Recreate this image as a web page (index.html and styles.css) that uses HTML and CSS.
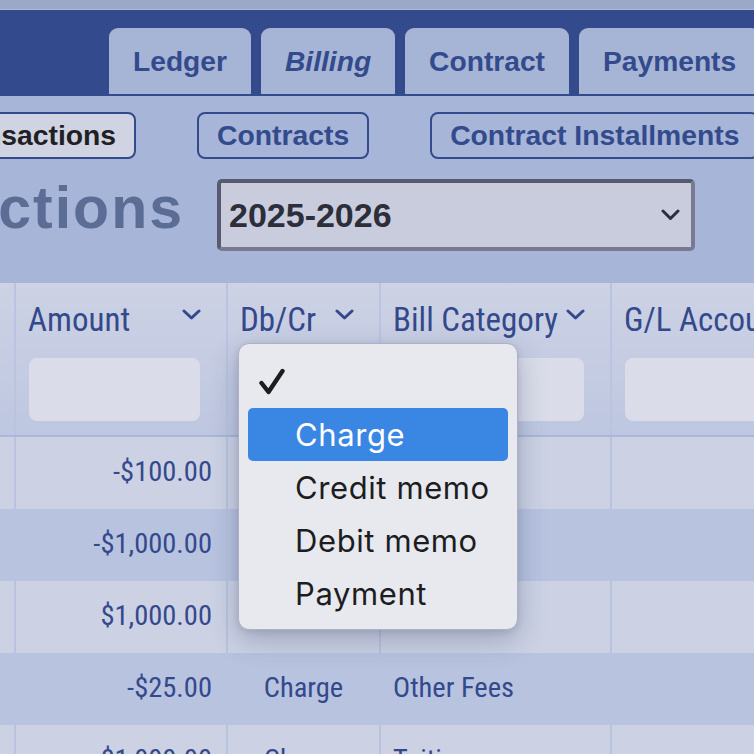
FILE: index.html
```html
<!DOCTYPE html>
<html lang="en">
<head>
<meta charset="utf-8">
<title>Billing Transactions</title>
<link rel="stylesheet" href="styles.css">
</head>
<body>
<div class="topbar"></div>
<header class="masthead">
  <nav class="tabs">
    <a class="tab">Ledger</a>
    <a class="tab tab-current">Billing</a>
    <a class="tab">Contract</a>
    <a class="tab">Payments</a>
  </nav>
</header>
<main class="content">
  <div class="subnav">
    <button class="subnav-btn is-active">Transactions</button>
    <button class="subnav-btn">Contracts</button>
    <button class="subnav-btn">Contract Installments</button>
  </div>
  <div class="title-row">
    <div class="title-box"><h1 class="page-title">Transactions</h1></div>
    <div class="year-select">
      <span class="year-value">2025-2026</span>
      <svg class="year-chevron" width="19" height="12" viewBox="0 0 19 12"><path d="M2 2 L9.5 9.5 L17 2" fill="none" stroke="#2c2e3a" stroke-width="3" stroke-linecap="round" stroke-linejoin="round"/></svg>
    </div>
  </div>

  <div class="grid-wrap">
    <div class="tr thead">
      <div class="th th-first"></div>
      <div class="th">
        <div class="th-label"><span>Amount</span><svg class="th-chev" width="19" height="11" viewBox="0 0 19 11"><path d="M2 2 L9.5 9 L17 2" fill="none" stroke="#34498c" stroke-width="3" stroke-linecap="round" stroke-linejoin="round"/></svg></div>
        <div class="filter"></div>
      </div>
      <div class="th">
        <div class="th-label"><span>Db/Cr</span><svg class="th-chev" width="19" height="11" viewBox="0 0 19 11"><path d="M2 2 L9.5 9 L17 2" fill="none" stroke="#34498c" stroke-width="3" stroke-linecap="round" stroke-linejoin="round"/></svg></div>
        <div class="filter"></div>
      </div>
      <div class="th">
        <div class="th-label"><span>Bill Category</span><svg class="th-chev" width="19" height="11" viewBox="0 0 19 11"><path d="M2 2 L9.5 9 L17 2" fill="none" stroke="#34498c" stroke-width="3" stroke-linecap="round" stroke-linejoin="round"/></svg></div>
        <div class="filter"></div>
      </div>
      <div class="th th-last">
        <div class="th-label"><span>G/L Account</span></div>
        <div class="filter"></div>
      </div>
    </div>

    <div class="tr row-light">
      <div class="td"></div>
      <div class="td num">-$100.00</div>
      <div class="td center"></div>
      <div class="td"></div>
      <div class="td"></div>
    </div>
    <div class="tr row-dark">
      <div class="td"></div>
      <div class="td num">-$1,000.00</div>
      <div class="td center"></div>
      <div class="td"></div>
      <div class="td"></div>
    </div>
    <div class="tr row-light">
      <div class="td"></div>
      <div class="td num">$1,000.00</div>
      <div class="td center"></div>
      <div class="td"></div>
      <div class="td"></div>
    </div>
    <div class="tr row-dark">
      <div class="td"></div>
      <div class="td num">-$25.00</div>
      <div class="td center">Charge</div>
      <div class="td">Other Fees</div>
      <div class="td"></div>
    </div>
    <div class="tr row-light">
      <div class="td"></div>
      <div class="td num">$1,000.00</div>
      <div class="td center">Charge</div>
      <div class="td">Tuition</div>
      <div class="td"></div>
    </div>

    <ul class="popup-menu">
      <li class="menu-item">
        <svg class="menu-check" width="28" height="28" viewBox="0 0 28 28"><path d="M3.5 15 L10.5 24 L24.5 3" fill="none" stroke="#1d1d1f" stroke-width="4.4" stroke-linecap="round" stroke-linejoin="round"/></svg>
      </li>
      <li class="menu-item is-hover">Charge</li>
      <li class="menu-item">Credit memo</li>
      <li class="menu-item">Debit memo</li>
      <li class="menu-item">Payment</li>
    </ul>
  </div>
</main>
</body>
</html>
```

FILE: styles.css
```css
* { box-sizing: border-box; }

html, body {
  margin: 0;
  padding: 0;
  overflow: hidden;
}

body {
  width: 754px;
  height: 754px;
  background: #a6b5d8;
  font-family: "Liberation Sans", Arial, sans-serif;
}

.topbar {
  height: 10px;
  background: #9ba8c8;
  border-bottom: 1px solid #aab7d8;
}

.masthead {
  background: #334a8c;
  padding: 18px 0 2px 109px;
  overflow: hidden;
}

.tabs {
  display: flex;
  gap: 10px;
  height: 66px;
}

.tab {
  flex: none;
  display: flex;
  align-items: center;
  padding: 0 24px;
  background: #a6b4d6;
  border-radius: 9px 9px 0 0;
  color: #334a8c;
  font-weight: bold;
  font-size: 28.2px;
  white-space: nowrap;
}

.tab-current { font-style: italic; }

.content {
  overflow: hidden;
}

.subnav {
  display: flex;
  gap: 61px;
  margin: 16px 0 0 -78.5px;
  width: 900px;
}

.subnav-btn {
  flex: none;
  height: 47px;
  padding: 0 18px;
  border: 2px solid #334a8c;
  border-radius: 8px;
  background: transparent;
  color: #334a8c;
  font-family: "Liberation Sans", Arial, sans-serif;
  font-weight: bold;
  font-size: 28.3px;
  white-space: nowrap;
}

.subnav-btn.is-active {
  background: #d0d3e1;
  color: #1f1f24;
}

.title-row {
  display: flex;
  align-items: center;
  margin-top: 20px;
  gap: 33px;
}

.title-box {
  flex: none;
  align-self: flex-start;
  width: 184px;
  display: flex;
  justify-content: flex-end;
  overflow: hidden;
}

.page-title {
  flex: none;
  margin: 0;
  font-size: 59px;
  line-height: 58px;
  font-weight: bold;
  letter-spacing: 2px;
  color: #5b6d94;
  white-space: nowrap;
}

.year-select {
  flex: none;
  width: 478px;
  height: 72px;
  display: flex;
  align-items: center;
  justify-content: space-between;
  padding: 0 11px 0 8px;
  background: #c9ccdc;
  border: 4px solid;
  border-color: #585b6e #777a90 #777a90 #585b6e;
  border-radius: 5px;
}

.year-value {
  font-size: 34px;
  font-weight: bold;
  color: #2c2e3a;
}

.grid-wrap {
  position: relative;
  margin-top: 32px;
  font-family: "Roboto Condensed", "Roboto", "Liberation Sans Narrow", sans-serif;
  font-stretch: condensed;
  color: #34498c;
}

.tr {
  display: grid;
  grid-template-columns: 14px 212px 153px 231px 144px;
}

.thead {
  height: 154px;
  background: linear-gradient(#cdd2e4, #bec7e1);
  border-bottom: 2px solid #aab7d8;
}

.th {
  display: flex;
  flex-direction: column;
  padding: 18px 25px 14px 12px;
  border-left: 2px solid #bac4e0;
}

.th-first { border-left: none; padding: 0; }
.th-last { padding-right: 0; }

.th-label {
  display: flex;
  justify-content: space-between;
  align-items: flex-start;
  height: 38px;
  font-size: 33px;
  line-height: 38px;
  white-space: nowrap;
}

.th-chev {
  flex: none;
  margin-top: 8px;
}

.filter {
  margin-top: 19px;
  margin-left: 1px;
  margin-right: 1px;
  height: 63px;
  border-radius: 8px;
  background: #dadde9;
}

.th-last .filter { margin-right: -20px; }

.row-light { background: #ccd2e4; }
.row-dark { background: #b8c3e0; }

.tr:not(.thead) { height: 72px; }

.td {
  display: flex;
  align-items: center;
  padding: 0 14px 4px 12px;
  font-size: 28.5px;
  white-space: nowrap;
  border-left: 2px solid #b9c3df;
}

.td:first-child { border-left: none; }

.td.num { justify-content: flex-end; }
.td.center { justify-content: center; padding-left: 0; padding-right: 0; }

.popup-menu {
  position: absolute;
  left: 238px;
  top: 60px;
  width: 280px;
  height: 287px;
  margin: 0;
  padding: 11px 9px;
  list-style: none;
  background: #e7e9ee;
  border: 1px solid #aeb2c0;
  border-radius: 11px;
  box-shadow: 0 10px 28px rgba(40, 50, 90, 0.28), 0 2px 6px rgba(40, 50, 90, 0.12);
  font-family: "Inter", "Noto Sans", sans-serif;
  font-stretch: normal;
  font-size: 31px;
  letter-spacing: 0.6px;
  color: #1d1d1f;
}

.menu-item {
  position: relative;
  height: 53px;
  display: flex;
  align-items: center;
  padding-left: 47px;
  border-radius: 5px;
}

.menu-item.is-hover {
  background: #3a86e3;
  color: #ffffff;
}

.menu-check {
  position: absolute;
  left: 10px;
  top: 13px;
}
```
